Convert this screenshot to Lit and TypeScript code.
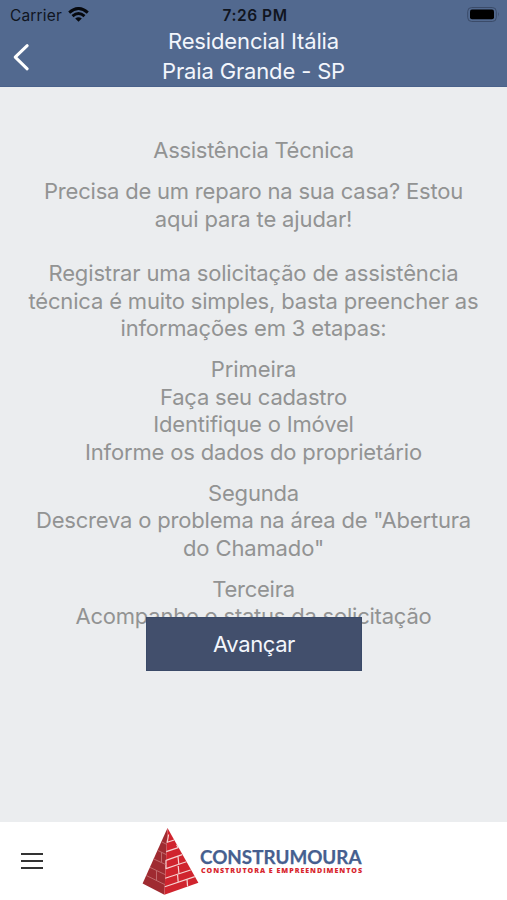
import { LitElement, html, css, svg } from "lit";
import { customElement } from "lit/decorators.js";

type Line = [text: string, width: number];

const paragraphs: Line[][] = [
  [["Assistência Técnica", 198.5]],
  [
    ["Precisa de um reparo na sua casa? Estou", 417],
    ["aqui para te ajudar!", 195.5],
    ["", 0],
    ["Registrar uma solicitação de assistência", 408],
    ["técnica é muito simples, basta preencher as", 448],
    ["informações em 3 etapas:", 264],
  ],
  [
    ["Primeira", 83.5],
    ["Faça seu cadastro", 185],
    ["Identifique o Imóvel", 198.5],
    ["Informe os dados do proprietário", 335],
  ],
  [
    ["Segunda", 89],
    ['Descreva o problema na área de "Abertura', 433],
    ['do Chamado"', 139],
  ],
  [
    ["Terceira", 80.5],
    ["Acompanhe o status da solicitação", 354],
  ],
];

@customElement("fit-text")
class FitText extends LitElement {
  static properties = {
    text: { type: String },
    width: { type: Number },
  };
  declare text: string;
  declare width: number;

  static styles = css`
    :host { display: block; text-align: center; white-space: nowrap; }
    .run { display: inline-block; }
  `;

  render() {
    return html`<span class="run">${this.text || "\u00a0"}</span>`;
  }

  async updated() {
    await document.fonts.ready;
    const run = this.renderRoot.querySelector<HTMLElement>(".run");
    if (!run || !this.text) return;
    run.style.letterSpacing = "0px";
    const natural = run.getBoundingClientRect().width;
    const gap = (this.width + 2 - natural) / this.text.length;
    run.style.letterSpacing = gap.toFixed(3) + "px";
  }
}

const bricks = svg`
  <svg class="mark" width="60" height="70" viewBox="0 0 60 70">
    <path d="M27.5 2 L2.6 57.6 L24.4 68.8 Z" fill="#9f2b31"/>
    <path d="M27.5 2 L24.4 68.8 L58.4 56.8 Z" fill="#d0242e"/>
    <g fill="none" stroke="#f6d3d2" stroke-width="1.2" stroke-linejoin="round">
      <path d="M28.6 8.5 L27.2 16.3 L34.2 14"/>
      <path d="M36.6 18.8 L38.2 21.6 L26.2 25.6"/>
      <path d="M42.2 28.6 L26 34.4 V42.6 L38.8 38.2 L38 30.2"/>
      <path d="M38.8 38.2 L46.4 35.8"/>
      <path d="M25.2 52.2 L50.6 44 M38.2 40 L39 48"/>
      <path d="M24.8 60.8 L54.8 50.6 M37.6 49 L38.2 56.2"/>
      <path d="M47 53.4 L47.6 60.4"/>
    </g>
    <g fill="none" stroke="#c9787a" stroke-width=".8">
      <path d="M21.5 15.8 L27 18.5 M17.6 24.4 L26.3 28.6 M13.8 33 L25.8 38.6 M10 41.4 L25.2 48.6 M6.3 49.5 L24.8 58.6"/>
      <path d="M21.5 26.5 V36 M16.5 45 V54.4"/>
    </g>
  </svg>`;

@customElement("app-root")
class AppRoot extends LitElement {
  static styles = css`
    :host {
      display: flex; flex-direction: column; height: 900px; width: 507px;
      overflow: hidden; background: #ebedef;
      font-family: Inter, "Liberation Sans", sans-serif;
    }
    .header { height: 87px; background: #52698f; flex: none; box-sizing: border-box; border-bottom: 1px solid #4a628b; }
    .status {
      height: 28px; display: grid; grid-template-columns: 1fr auto 1fr;
      align-items: center; color: #10151f; font-size: 15.5px; padding: 2px 7px 0 10px;
      box-sizing: border-box;
    }
    .carrier { display: flex; align-items: center; gap: 6px; }
    .time { font-weight: 600; }
    .battery { justify-self: end; }
    .bar { display: grid; grid-template-columns: 44px 1fr 44px; align-items: center; height: 58px; }
    .back { margin-left: 12px; }
    .title { color: #f3f6fc; font-size: 22px; line-height: 30px; margin-top: -2px; }
    .content { flex: 1; padding-top: 50px; color: #929393; font-size: 22px; line-height: 27.4px; position: relative; }
    .para { margin-bottom: 13.8px; }
    .advance {
      position: absolute; left: 146px; top: 530px; width: 216px; height: 54px;
      border: 1px solid #3a4a68; box-sizing: border-box; padding: 0; background: #424f6c; color: #f3f6fc;
      font: 22px/50px Inter, "Liberation Sans", sans-serif;
    }
    .footer { height: 78px; flex: none; background: #fff; display: flex; align-items: center; }
    .menu { margin-left: 21px; width: 22px; }
    .logo { margin-left: 97px; display: flex; }
    .name { font: 700 18.4px Lato, sans-serif; fill: #465f8f; stroke: #465f8f; stroke-width: .25; }
    .tag { font: 800 6.6px "Open Sans", sans-serif; fill: #d8262e; letter-spacing: .9px; }
  `;

  render() {
    return html`
      <header class="header">
        <div class="status">
          <div class="carrier">
            <fit-text text="Carrier" .width=${50}></fit-text>
            <svg width="21" height="16" viewBox="0 0 21 16" fill="none" stroke="#06080d" stroke-width="2.9">
              <path d="M1.2 5.6 Q10.5 -2.6 19.8 5.6"/>
              <path d="M4.5 9.1 Q10.5 3.8 16.5 9.1"/>
              <path d="M10.5 14.8 L7.2 11.5 Q10.5 8.8 13.8 11.5 Z" fill="#06080d" stroke="none"/>
            </svg>
          </div>
          <fit-text class="time" text="7:26 PM" .width=${63}></fit-text>
          <svg class="battery" width="33" height="16" viewBox="0 0 33 16">
            <rect x=".7" y=".5" width="28.6" height="14" rx="4" fill="none" stroke="#3b4b69"/>
            <rect x="3" y="2.5" width="24" height="9.8" rx="2" fill="#000"/>
            <path d="M31 5 Q32.8 7.4 31 9.8 Z" fill="#3b4b69"/>
          </svg>
        </div>
        <div class="bar">
          <svg class="back" width="20" height="30" viewBox="0 0 20 30" fill="none" stroke="#fff" stroke-width="3" stroke-linecap="round" stroke-linejoin="round">
            <path d="M15.2 3.7 L3.2 15.2 L15.2 26.8"/>
          </svg>
          <div class="title">
            <fit-text text="Residencial Itália" .width=${169}></fit-text>
            <fit-text text="Praia Grande - SP" .width=${181}></fit-text>
          </div>
        </div>
      </header>
      <main class="content">
        ${paragraphs.map((lines) => html`<div class="para">
          ${lines.map(([text, width]) => html`<fit-text .text=${text} .width=${width}></fit-text>`)}
        </div>`)}
        <button class="advance"><fit-text text="Avançar" .width=${80}></fit-text></button>
      </main>
      <footer class="footer">
        <svg class="menu" width="22" height="20" viewBox="0 0 22 20" fill="none" stroke="#333" stroke-width="2.1">
          <path d="M0 3 H22 M0 10 H22 M0 17 H22"/>
        </svg>
        <div class="logo">
          ${bricks}
          <svg width="168" height="70" viewBox="0 0 168 70">
            <text class="name" x="0" y="38" textLength="161.5" lengthAdjust="spacingAndGlyphs">CONSTRUMOURA</text>
            <text class="tag" x="1" y="46.6" textLength="162" lengthAdjust="spacingAndGlyphs">CONSTRUTORA E EMPREENDIMENTOS</text>
          </svg>
        </div>
      </footer>`;
  }
}
